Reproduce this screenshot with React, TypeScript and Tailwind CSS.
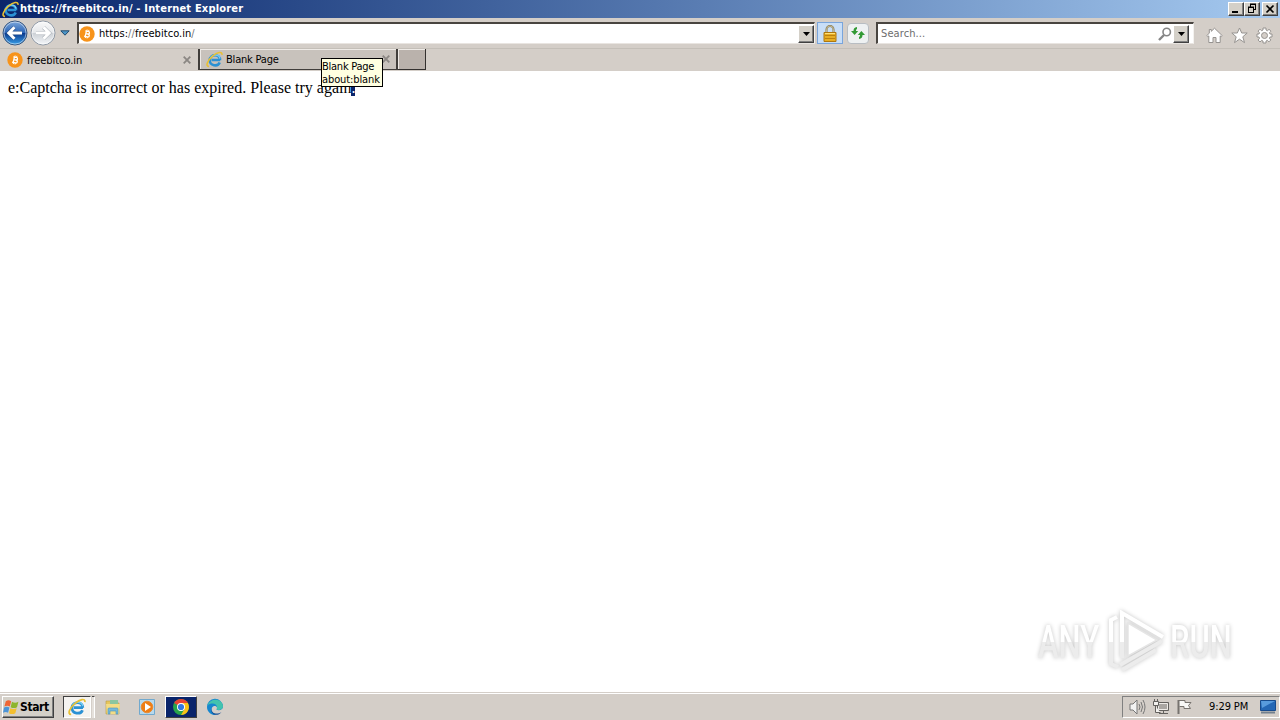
import clsx from 'clsx';
import type { ReactNode } from 'react';

const RAISED =
  'border border-t-white border-l-white border-r-[#404040] border-b-[#404040] bg-[#d4d0c8] shadow-[inset_-1px_-1px_0_#808080]';

function ExplorerIcon({ className }: { className?: string }) {
  return (
    <svg viewBox="0 0 16 16" className={className} fill="none">
      <path d="M13.3 8.5H5.2M13.2 8.7C13.5 2.6 3.8 2.4 3.5 8.6c-.1 5.6 7.8 6.4 9.4 2.2" stroke="#2b91d4" strokeWidth="2.4" />
      <path d="M13.1 7.2C12.6 3 5.6 2.7 4 7.2" stroke="#74cff5" strokeWidth="1.2" />
      <path d="M2.8 14.5C-.8 14.7 1.3 8.8 6.2 4.8 10.4 1.3 15.6-.3 15 3.7" stroke="#e9c033" strokeWidth="1.5" />
    </svg>
  );
}

function BitcoinIcon() {
  return (
    <svg viewBox="0 0 16 16" className="size-4 shrink-0">
      <circle cx="8" cy="8" r="7.7" fill="#f7931a" />
      <g transform="rotate(12 8 8)" fill="none" stroke="#fff">
        <path d="M5.7 5.2h3c2 0 2 2.6 0 2.6H6.6h2.3c2.3 0 2.3 3 0 3H5.7M6.8 5.2v5.6" strokeWidth="1.3" />
        <path d="M7.2 3.6v1.5M9 3.6v1.5M7.2 10.8v1.5M9 10.8v1.5" strokeWidth=".9" />
      </g>
    </svg>
  );
}

function NavButton({ forward }: { forward?: boolean }) {
  return (
    <svg viewBox="0 0 26 26" className="size-[26px] shrink-0">
      <defs>
        <linearGradient id={forward ? 'fwd' : 'back'} x2="0" y2="1">
          <stop stopColor={forward ? '#fafafa' : '#7fa9dc'} />
          <stop offset=".48" stopColor={forward ? '#e5e7ea' : '#2c65b6'} />
          <stop offset=".52" stopColor={forward ? '#cdd1d6' : '#0b3b8f'} />
          <stop offset="1" stopColor={forward ? '#f5f8fb' : '#3ba3eb'} />
        </linearGradient>
      </defs>
      <circle cx="13" cy="13" r="12" fill={forward ? 'url(#fwd)' : 'url(#back)'} stroke={forward ? '#8e98a5' : '#39577f'} />
      <circle cx="13" cy="13" r="11" fill="none" stroke="#fff" strokeOpacity=".5" />
      <path
        d="M20 13H7M12.5 7.3 6.8 13l5.7 5.7"
        transform={forward ? 'rotate(180 13 13)' : undefined}
        fill="none"
        stroke={forward ? '#a9afb6' : '#1d4580'}
        strokeWidth="4"
      />
      <path
        d="M20 13H7M12.5 7.3 6.8 13l5.7 5.7"
        transform={forward ? 'rotate(180 13 13)' : undefined}
        fill="none"
        stroke="#fff"
        strokeWidth="3"
      />
    </svg>
  );
}

function DropButton() {
  return (
    <div className={clsx(RAISED, 'flex h-[18px] w-4 shrink-0 items-center justify-center')}>
      <svg viewBox="0 0 7 4" className="h-1 w-[7px]">
        <path d="M0 0h7L3.5 4z" />
      </svg>
    </div>
  );
}

function WindowButton({ children, className }: { children: ReactNode; className?: string }) {
  return (
    <div className={clsx(RAISED, 'h-[14px] w-4', className)}>
      <svg viewBox="0 0 14 12" className="h-3 w-[14px]" fill="none" stroke="#000">
        {children}
      </svg>
    </div>
  );
}

function TitleBar() {
  return (
    <div className="flex h-[18px] shrink-0 items-center bg-linear-to-r from-[#0a246a] to-[#a6caf0] pr-[2px] pl-[2px]">
      <ExplorerIcon className="size-[17px] shrink-0" />
      <span className="ml-px flex-1 pt-px text-[11px] font-bold tracking-[0.18px] text-white">
        https://freebitco.in/ - Internet Explorer
      </span>
      <WindowButton>
        <path d="M3 9h6" strokeWidth="2" />
      </WindowButton>
      <WindowButton>
        <path d="M5 1.5h6M5.5 2v2M10.5 1v6M9 6.5h2M3 4.5h6M3.5 4v6M8.5 4v6M3 9.5h6" />
        <path d="M5 1h6M3 4h6" />
      </WindowButton>
      <WindowButton className="ml-[2px]">
        <path d="m3.5 2.5 7 7m0-7-7 7" strokeWidth="1.7" />
      </WindowButton>
    </div>
  );
}

function Toolbar() {
  return (
    <div className="flex h-[30px] shrink-0 items-center bg-[#d4cec8] pl-[2px]">
      <NavButton />
      <div className="ml-[2px] flex">
        <NavButton forward />
      </div>
      <svg viewBox="0 0 10 6" className="ml-1 h-[6px] w-[10px]">
        <path d="M.8.8h8.4L5 5.2z" fill="#4c96c8" stroke="#244d70" />
      </svg>
      <div className="ml-[7px] flex h-[22px] w-[738px] items-center border border-t-2 border-l-2 border-t-[#494540] border-l-[#494540] border-r-[#f4f2ef] border-b-[#e9e5e1] bg-white">
        <BitcoinIcon />
        <span className="ml-1 flex-1 pt-px text-[11px] tracking-[0.05px]">
          https:<span className="text-[#777]">//</span>freebitco.in<span className="text-[#777]">/</span>
        </span>
        <DropButton />
      </div>
      <div className="ml-[2px] flex h-[22px] w-[26px] items-center justify-center border border-[#79a5dc] bg-[#c8def7]">
        <svg viewBox="0 0 14 17" className="h-[17px] w-[14px]">
          <path d="M3.5 8V4.5a3.5 3.5 0 0 1 7 0V8" fill="none" stroke="#87794c" strokeWidth="2" />
          <path d="M3.5 8V4.5a3.5 3.5 0 0 1 7 0V8" fill="none" stroke="#d8d1b5" strokeWidth=".7" />
          <path d="M1 7.5h12v9H1z" fill="#e7ae25" stroke="#ad7710" />
          <path d="M2 10.5h10M2 13.5h10" stroke="#bd810f" />
          <path d="M2 8.5h10" stroke="#ffe17b" />
        </svg>
      </div>
      <div className="ml-1 flex h-[21px] w-[22px] items-center justify-center rounded-sm border border-[#b8bdc2] bg-[#eef1f2]">
        <svg viewBox="0 0 16 14" className="h-[14px] w-4" fill="#329a35">
          <path d="M1 5h2.5C3.5 2.8 4.4 1.5 7 1v2c-.8.4-1 .9-1 2h2.2L4.6 9z" />
          <path d="M15 9h-2.5c0 2.2-.9 3.5-3.5 4v-2c.8-.4 1-.9 1-2H7.8l3.6-4z" />
        </svg>
      </div>
      <div className="ml-[7px] flex h-[22px] w-[318px] items-center border border-t-2 border-l-2 border-t-[#494540] border-l-[#494540] border-r-[#f4f2ef] border-b-[#e9e5e1] bg-white pr-1 pl-[3px]">
        <span className="flex-1 pt-px text-[11px] tracking-[0.1px] text-[#6d6d6d]">Search...</span>
        <svg viewBox="0 0 14 14" className="mr-px size-[14px]" fill="none" stroke="#858585">
          <circle cx="8.7" cy="5" r="3.7" strokeWidth="1.6" />
          <path d="m6 8-5 5" strokeWidth="2.4" />
        </svg>
        <DropButton />
      </div>
      <div className="ml-[12px] flex items-center gap-2 pt-1">
        <svg viewBox="0 0 17 17" className="size-[17px]" fill="#fff" stroke="#969390">
          <path d="m8.5 1.2 7.7 7.4-1 1.1-1-.8v6.6H10v-5H7v5H2.8V8.9l-1 .8-1-1.1 2.5-2.4V2.5h2v1.8z" />
        </svg>
        <svg viewBox="0 0 17 17" className="size-[17px]" fill="#fff" stroke="#969390">
          <path d="m8.5 1 2.2 5h5.5l-4.4 3.8 1.7 5.8-5-3.4-5 3.4 1.7-5.8L.8 6h5.5z" />
        </svg>
        <svg viewBox="0 0 17 17" className="size-[17px]" fill="#fff" stroke="#969390">
          <path
            fillRule="evenodd"
            d="M7 1h3v2l1.5.7L13 2.3 15 4.2l-1.5 1.5L14 7h2v3h-2l-.6 1.5 1.5 1.4-2 2-1.4-1.5L10 14v2H7v-2l-1.5-.6L4.1 15 2 12.9l1.5-1.4L3 10H1V7h2l.5-1.4L2 4.2l2-2 1.5 1.5L7 3zM8.5 5.5a3 3 0 1 0 0 6 3 3 0 0 0 0-6"
          />
        </svg>
      </div>
    </div>
  );
}

function CloseGlyph() {
  return (
    <svg viewBox="0 0 8 8" className="size-2 shrink-0" stroke="#8b8783" strokeWidth="1.8">
      <path d="m.7.7 6.6 6.6m0-6.6L.7 7.3" />
    </svg>
  );
}

function TabStrip() {
  return (
    <div className="relative flex h-[23px] shrink-0 border-t border-[#c4bfb8] bg-[#d4cec8] text-[11px]">
      <div className="flex w-[198px] items-center pr-[7px] pl-[7px]">
        <BitcoinIcon />
        <span className="ml-1 flex-1 pt-[2px] tracking-[-0.05px]">freebitco.in</span>
        <CloseGlyph />
      </div>
      <div className="mb-px flex w-[200px] items-center border-r-2 border-b border-l-2 border-r-[#413e3b] border-b-[#413e3b] border-l-[#413e3b] bg-[#c8c2bc] pr-[6px] pl-[6px] shadow-[inset_1px_1px_0_#eeeae6]">
        <ExplorerIcon className="size-[17px]" />
        <span className="ml-[3px] flex-1 pt-[3px] tracking-[-0.2px]">Blank Page</span>
        <CloseGlyph />
      </div>
      <div className="mb-px w-7 border-r border-b border-[#34312f] bg-[#bab2ac] shadow-[inset_1px_1px_0_#eeeae6]" />
      <div className="absolute top-[9px] left-[321px] z-10 h-[29px] w-[62px] border border-black bg-[#ffffe1] pt-px text-[11px] leading-[13px] tracking-[-0.1px] whitespace-nowrap">
        <p className="tracking-[-0.25px]">Blank Page</p>
        <p>about:blank</p>
      </div>
    </div>
  );
}

function Watermark() {
  return (
    <div className="absolute top-[536px] left-[1038px] flex h-[68px] w-[198px] items-center justify-between [filter:drop-shadow(0_0_2px_#c4c4c4)]">
      <span className="w-[95px] origin-left scale-x-[.66] bg-linear-to-b from-white from-50% to-[#ececec] to-50% bg-clip-text font-[Roboto] text-[47px] leading-none font-medium text-transparent">
        ANY
      </span>
      <svg viewBox="0 0 56 62" className="absolute left-[71px] h-[62px] w-14 shrink-0" fill="none" strokeWidth="4">
        <path d="M2 53V10l6-3M13 48V3l41 24" stroke="#fff" />
        <path d="M2 32v22l7 3M11 55l42-24M13 60l34-20M13 32v16" stroke="#ececec" />
        <path d="m19 13 29 17-29 16z" fill="#fff" stroke="#e5e5e5" strokeWidth="1.5" />
      </svg>
      <span className="-mr-[28px] w-[94px] shrink-0 origin-left scale-x-[.66] bg-linear-to-b from-white from-50% to-[#ececec] to-50% bg-clip-text font-[Roboto] text-[47px] leading-none font-medium text-transparent">
        RUN
      </span>
    </div>
  );
}

function PageContent() {
  return (
    <main className="relative flex-1 bg-white px-2 pt-[8px]">
      <p className="font-['Liberation_Serif',serif] text-[16px] leading-[18px]">
        e:Captcha is incorrect or has expired. Please try again
        <span className="bg-[#0a246a] text-white">.</span>
      </p>
      <Watermark />
    </main>
  );
}

function Taskbar() {
  return (
    <div className="flex h-[28px] shrink-0 items-center border-t border-[#d4cec8] bg-[#d4cec8] shadow-[inset_0_1px_0_#fff]">
      <div className={clsx(RAISED, 'ml-[2px] flex h-[22px] w-[52px] items-center')}>
        <svg viewBox="0 0 16 16" className="size-4 shrink-0">
          <path d="M2.8 2.2c2-1.5 3.7-1.2 5.4 0L6.8 7.6c-1.6-1.1-3.4-1.1-5.4 0z" fill="#ef6535" />
          <path d="M9 2.8c2 1.2 4.2 1.2 6.4 0L14 8.2c-2.2 1.2-4.2 1.2-6.4 0z" fill="#8eb52c" />
          <path d="M1.1 8.6c2-1.2 3.7-1 5.3 0l-1.3 5.2c-1.5-1-3.2-1-5.1 0z" fill="#4c94d7" />
          <path d="M7.3 9.2c2 1 4.2 1 6.4 0l-1.4 5c-2 1.2-4.2 1.2-6.3 0z" fill="#f3bf30" />
        </svg>
        <span className="ml-px text-[12px] font-bold tracking-[-0.4px]">Start</span>
      </div>
      <div className="ml-[9px] flex h-[22px] w-[28px] items-center justify-center border border-t-[#404040] border-r-white border-b-white border-l-[#404040] bg-[#f5f3f0]">
        <ExplorerIcon className="size-[18px]" />
      </div>
      <div className="ml-px h-[22px] w-[3px] border-t border-r border-t-[#404040] border-r-white bg-[#e5e1dc]" />
      <svg viewBox="0 0 18 18" className="ml-[9px] size-[18px]">
        <path d="M2 3h5l1 2h7v11H2z" fill="#e6c65d" stroke="#b89a43" strokeWidth=".6" />
        <path d="M6 2h8v5H6z" fill="#8ac69f" />
        <path d="M2 6h14l-1 10H3z" fill="#f3dc85" />
        <path d="M4 16v-5q0-1 1-1h8q1 0 1 1v5h-2v-3H6v3z" fill="#75b8d9" stroke="#4b95bd" strokeWidth=".6" />
      </svg>
      <svg viewBox="0 0 18 18" className="ml-4 size-[18px]">
        <path d="M1.5 1.5h15v15h-15z" fill="#b8d9ec" stroke="#71a9ce" />
        <circle cx="9" cy="9" r="5.8" fill="#ef7d13" stroke="#e88b35" />
        <path d="m7 5 6 4-6 4z" fill="#fff" />
      </svg>
      <div className="ml-[9px] flex h-[22px] w-8 items-center justify-center border border-t-white border-r-[#404040] border-b-[#404040] border-l-white bg-[#0a246a]">
        <svg viewBox="0 0 16 16" className="size-4">
          <circle cx="8" cy="8" r="8" fill="#28a34b" />
          <path d="M8 8 1.1 4A8 8 0 0 1 14.9 4z" fill="#e84234" />
          <path d="M8 4h6.9A8 8 0 0 1 8 16l3.5-6z" fill="#fbc116" />
          <circle cx="8" cy="8" r="4" fill="#fff" />
          <circle cx="8" cy="8" r="3.1" fill="#3378e2" />
        </svg>
      </div>
      <svg viewBox="0 0 18 18" className="ml-[9px] size-[18px]">
        <path d="M1 9a8 8 0 0 1 16-.5c0 4-5 4.3-6.5 3 1.5-2-.3-4-2.5-3.5C4 9 5 16 11 17 5.5 17.8 1 14 1 9" fill="#1687cf" />
        <path d="M1.3 7.5C4 0 15.8-.5 17 8c0 4-5 4.5-6.5 3.5C13 6 6 3.5 1.3 7.5" fill="#42c3ae" />
        <path d="M5.5 9.5c-1 6.5 6 7.5 10 4.5-4 5.5-12 2.5-10-4.5" fill="#174f96" />
      </svg>
      <div className="ml-auto flex h-[22px] w-[158px] items-center border border-t-[#808080] border-r-white border-b-white border-l-[#808080] pr-[3px] pl-[5px]">
        <svg viewBox="0 0 18 18" className="size-[18px] shrink-0" fill="none" stroke="#777">
          <path d="M2 6h3l4-4v14l-4-4H2z" fill="#f2f2f2" />
          <path d="M11 6q2 3 0 6M13 4q3 5 0 10M15 2q4 7 0 14" />
        </svg>
        <svg viewBox="0 0 18 18" className="ml-[6px] size-[18px] shrink-0" stroke="#64615e">
          <path d="M5.5 4.5h11v8h-11z" fill="#aaa6a2" />
          <path d="M6.5 5.5h9v6h-9z" fill="none" stroke="#eeebe7" />
          <path d="M7 15.5h9M11.5 13v2" />
          <path d="M1.5 3.5h5v4h-5zM2.5 1v2m3-2v2M3.5 8v6.5h5" fill="#f3f1ee" />
        </svg>
        <svg viewBox="0 0 18 18" className="ml-[5px] size-[18px] shrink-0" stroke="#77736f">
          <path d="M4 2.5h6v2h6l-2.5 3 2 3H9v-2H4.5" fill="#f8f8f6" />
          <path d="M3.5 2v14" strokeWidth="2" />
        </svg>
        <span className="ml-4 pt-[2px] text-[11px] whitespace-nowrap tracking-[-0.1px]">9:29 PM</span>
        <svg viewBox="0 0 16 15" className="ml-auto h-[15px] w-4 shrink-0">
          <path d="M.5 1.5h15v10H.5z" fill="#2467b5" stroke="#174b8d" />
          <path d="M1 2h14L2 9z" fill="#589bdd" />
          <path d="M1 13.5h14" stroke="#73808e" strokeWidth="2" />
        </svg>
      </div>
    </div>
  );
}

export default function App() {
  return (
    <div className="flex h-[720px] w-[1280px] flex-col overflow-hidden bg-white font-['DejaVu_Sans_Condensed','DejaVu_Sans',sans-serif] text-black">
      <TitleBar />
      <Toolbar />
      <TabStrip />
      <PageContent />
      <Taskbar />
    </div>
  );
}
